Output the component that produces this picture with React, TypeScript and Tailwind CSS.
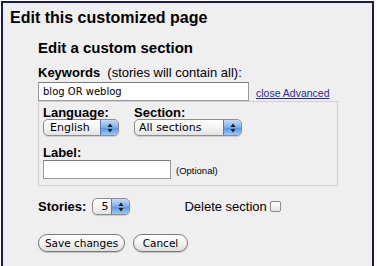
const macSelect =
  'flex items-center h-[17px] rounded-[5px] border border-[#8d8d8d] bg-[linear-gradient(#ffffff,#f3f3f3_50%,#e3e3e3)] shadow-[0_1px_1px_rgba(0,0,0,0.15)] overflow-hidden';

function Arrows() {
  return (
    <span className="ml-auto flex h-full w-[18px] items-center justify-center rounded-r-[4px] border-l border-[#5a7fb8] bg-[linear-gradient(#c4dcf7,#7aaeea_50%,#5594e2_51%,#9cc8f6)]">
      <svg width="6" height="10" viewBox="0 0 6 10">
        <path d="M3 0.5 L5.5 4 L0.5 4 Z" fill="#1b1b1b" />
        <path d="M3 9.5 L5.5 6 L0.5 6 Z" fill="#1b1b1b" />
      </svg>
    </span>
  );
}

function Select({ value, width, pad }: { value: string; width: string; pad: string }) {
  return (
    <div className={`${macSelect} ${width}`}>
      <span className={`${pad} text-[11px] leading-none text-black [font-family:'DejaVu_Sans',sans-serif]`}>
        {value}
      </span>
      <Arrows />
    </div>
  );
}

function MacButton({ label, width }: { label: string; width: string }) {
  return (
    <button
      className={`h-[18px] ${width} rounded-full border border-[#7a7a7a] bg-[linear-gradient(#ffffff,#f2f2f2_50%,#dedede)] shadow-[0_1px_1px_rgba(0,0,0,0.2)] text-[10.5px] leading-none text-black [font-family:'DejaVu_Sans',sans-serif]`}
    >
      {label}
    </button>
  );
}

export default function App() {
  return (
    <div className="w-[377px] h-[266px] bg-white overflow-hidden [font-family:'Liberation_Sans',Arial,sans-serif]">
      <div className="ml-px mt-px w-[373px] h-[265px] border-l-2 border-t-2 border-r-2 border-[#1b1a5a] bg-[#efefef]">
        <h1 className="pl-[7px] pt-[5px] text-[16px] font-bold leading-[20px] text-black">
          Edit this customized page
        </h1>

        <div className="pl-[35px] pt-[11px]">
          <h2 className="text-[15px] font-bold leading-[18px] text-black">Edit a custom section</h2>

          <p className="mt-[8px] text-[13px] leading-[16px] text-black">
            <b>Keywords</b>&nbsp; (stories will contain all):
          </p>

          <div className="mt-px flex items-end">
            <div className="h-[19px] w-[211px] border border-[#9a9a9a] border-t-[#7c7c7c] bg-white pl-[4px] text-[10px] leading-[17px] text-black [font-family:'DejaVu_Sans',sans-serif]">
              blog OR weblog
            </div>
            <a className="ml-[7px] mb-[2px] text-[10.5px] leading-[12px] text-[#2a2a8c] underline">close Advanced</a>
          </div>

          <div className="w-[300px] border border-[#cfcfcf] px-[4px] pt-[4px] pb-[6px]">
            <div className="flex gap-[15px]">
              <div>
                <div className="text-[13px] font-bold leading-[13px] text-black">Language:</div>
                <Select value="English" width="w-[76px]" pad="pl-[6px]" />
              </div>
              <div>
                <div className="text-[13px] font-bold leading-[13px] text-black">Section:</div>
                <Select value="All sections" width="w-[108px]" pad="pl-[4px]" />
              </div>
            </div>
            <div className="mt-[10px] text-[13px] font-bold leading-[13px] text-black">Label:</div>
            <div className="mt-px flex items-end">
              <div className="h-[19px] w-[128px] border border-[#9a9a9a] border-t-[#7c7c7c] bg-white" />
              <span className="ml-[5px] mb-[3px] text-[9.5px] leading-[10px] text-black">(Optional)</span>
            </div>
          </div>

          <div className="mt-[12px] flex items-center">
            <span className="text-[13px] font-bold leading-[15px] text-black">Stories:</span>
            <div className="ml-[6px]">
              <Select value="5" width="w-[38px]" pad="pl-[8px]" />
            </div>
            <span className="ml-[54px] text-[13px] leading-[15px] text-black">Delete section</span>
            <span className="ml-[3px] h-[11px] w-[11px] rounded-[2px] border border-[#8a8a8a] bg-[linear-gradient(#ffffff,#e6e6e6)]" />
          </div>

          <div className="mt-[19px] flex gap-[8px]">
            <MacButton label="Save changes" width="w-[87px]" />
            <MacButton label="Cancel" width="w-[55px]" />
          </div>
        </div>
      </div>
    </div>
  );
}
